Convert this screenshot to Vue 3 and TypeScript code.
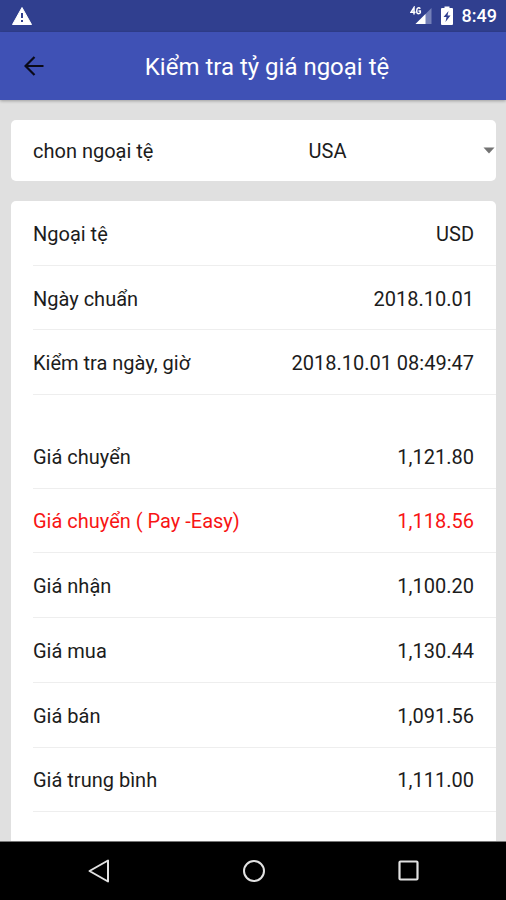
<script setup lang="ts">
import { ref } from 'vue'

interface Rate {
  label: string
  value: string
  highlight?: boolean
}

const currency = ref('USA')

const info: Rate[] = [
  { label: 'Ngoại tệ', value: 'USD' },
  { label: 'Ngày chuẩn', value: '2018.10.01' },
  { label: 'Kiểm tra ngày, giờ', value: '2018.10.01 08:49:47' },
]

const rates: Rate[] = [
  { label: 'Giá chuyển', value: '1,121.80' },
  { label: 'Giá chuyển ( Pay -Easy)', value: '1,118.56', highlight: true },
  { label: 'Giá nhận', value: '1,100.20' },
  { label: 'Giá mua', value: '1,130.44' },
  { label: 'Giá bán', value: '1,091.56' },
  { label: 'Giá trung bình', value: '1,111.00' },
]
</script>

<template>
  <div class="screen">
    <div class="status">
      <svg class="warning" width="20" height="18" viewBox="0 0 20 18" aria-hidden="true">
        <path d="M10 0.5 L19.5 17.5 H0.5 Z" fill="#fff" stroke="#fff" stroke-linejoin="round" />
        <path d="M9 6h2v5H9zM9 13h2v2H9z" fill="#303f8f" />
      </svg>
      <div class="status-right">
        <svg width="22" height="20" viewBox="0 0 22 20" aria-hidden="true">
          <path d="M21.500 2V18H5.500Z" fill="#7480b8" />
          <path d="M5.500 18L15.500 8V18Z" fill="#fff" />
          <path d="M0 0H11V9H0z" fill="#303f8f" />
          <path d="M4 8.500V1.500L1 6.300h4.500M10.300 2.800Q9.300 1.500 8 2Q6.700 2.500 6.700 5Q6.700 7.500 8.200 7.700Q10 7.700 10.300 6.800V5H8.500" fill="none" stroke="#fff" stroke-width="1.500" />
        </svg>
        <svg class="battery" width="12" height="20" viewBox="0 0 12 20" aria-hidden="true">
          <path d="M3.500 0.500h5V2H11q1 0 1 1v15q0 1-1 1H1q-1 0-1-1V3q0-1 1-1h2.500z" fill="#fff" />
          <path d="M7.500 5 L2.500 11H5.500L4.500 16 L9.500 9.500H6.500Z" fill="#303f8f" />
        </svg>
        <span class="clock">8:49</span>
      </div>
    </div>

    <header class="bar">
      <button class="back" type="button" aria-label="Quay lại">
        <svg width="20" height="20" viewBox="0 0 20 20" aria-hidden="true">
          <path d="M19.500 10H2M10.500 1 L1.500 10 L10.500 19" fill="none" stroke="#0a0a18" stroke-width="2.200" />
        </svg>
      </button>
      <h1>Kiểm tra tỷ giá ngoại tệ</h1>
    </header>

    <main class="content">
      <section class="card picker">
        <label for="currency">chon ngoại tệ</label>
        <div class="select-wrap">
          <select id="currency" v-model="currency">
            <option value="USA">USA</option>
          </select>
          <svg class="caret" width="12" height="7" viewBox="0 0 12 7" aria-hidden="true">
            <path d="M0.500 0.500h11L6 6.500z" fill="#737373" />
          </svg>
        </div>
      </section>

      <dl class="card list">
        <div v-for="row in info" :key="row.label" class="row">
          <dt>{{ row.label }}</dt>
          <dd>{{ row.value }}</dd>
        </div>
        <div class="spacer"></div>
        <div v-for="row in rates" :key="row.label" class="row" :class="{ highlight: row.highlight }">
          <dt>{{ row.label }}</dt>
          <dd>{{ row.value }}</dd>
        </div>
        <div class="spacer"></div>
      </dl>
    </main>

    <nav class="nav">
      <button type="button" aria-label="Trở về">
        <svg width="24" height="24" viewBox="0 0 24 24" aria-hidden="true">
          <path d="M21 1.500V22.500L2.500 12Z" fill="none" stroke="#e2e2e2" stroke-width="2" stroke-linejoin="round" />
        </svg>
      </button>
      <button type="button" aria-label="Màn hình chính">
        <svg width="24" height="24" viewBox="0 0 24 24" aria-hidden="true">
          <circle cx="12" cy="12" r="10" fill="none" stroke="#e2e2e2" stroke-width="2" />
        </svg>
      </button>
      <button type="button" aria-label="Ứng dụng gần đây">
        <svg width="24" height="24" viewBox="0 0 24 24" aria-hidden="true">
          <rect x="2.500" y="2.500" width="18" height="18" rx="1" fill="none" stroke="#e2e2e2" stroke-width="2.200" />
        </svg>
      </button>
    </nav>
  </div>
</template>

<style>
body {
  margin: 0;
  background: #e0e0e0;
}
</style>

<style scoped>
.screen {
  display: flex;
  flex-direction: column;
  min-height: 100vh;
  font-family: Roboto, "Noto Sans", sans-serif;
  font-size: 20px;
  line-height: 24px;
  color: #1c1c1c;
}

button {
  display: flex;
  align-items: center;
  justify-content: center;
  padding: 0;
  border: 0;
  background: none;
}

.status {
  display: flex;
  align-items: center;
  justify-content: space-between;
  height: 32px;
  padding: 0 9px 0 12px;
  background: #303f8f;
}

.status-right {
  display: flex;
  align-items: center;
  gap: 9px;
}

.clock {
  color: #fff;
  font-size: 18px;
  font-weight: 500;
}

.bar {
  position: relative;
  z-index: 1;
  display: grid;
  grid-template-columns: 68px 1fr 40px;
  align-items: center;
  height: 68px;
  background: #3f51b5;
  box-shadow: 0 1px 3px rgba(0, 0, 0, 0.3);
}

.back {
  height: 68px;
}

h1 {
  margin: 0;
  padding-top: 2px;
  text-align: center;
  color: #fff;
  font-size: 24px;
  font-weight: 400;
}

.content {
  flex: 1;
  display: flex;
  flex-direction: column;
  gap: 20px;
  padding: 20px 10px 0 11px;
  background: #e0e0e0;
}

.card {
  margin: 0;
  padding-left: 22px;
  border-radius: 5px;
  background: #fff;
}

.picker {
  display: grid;
  grid-template-columns: 4fr 3fr;
  align-items: center;
  height: 61px;
}

.select-wrap {
  position: relative;
  display: flex;
  align-items: center;
}

select {
  width: 100%;
  height: 61px;
  padding: 0 24px 0 11px;
  border: 0;
  border-radius: 5px;
  appearance: none;
  background: transparent;
  color: inherit;
  font: inherit;
}

.caret {
  position: absolute;
  right: 1px;
  pointer-events: none;
}

.list {
  flex: 1;
  display: flex;
  flex-direction: column;
  border-radius: 5px 5px 0 0;
}

.row {
  flex: 20 0 0;
  display: flex;
  align-items: center;
  justify-content: space-between;
  box-sizing: border-box;
  min-height: 48px;
  padding-right: 22px;
  border-bottom: 1px solid #eee;
}

.spacer {
  flex: 9 0 0;
}

dt,
dd {
  margin: 0;
  padding-top: 2px;
}

.highlight {
  color: #f81414;
}

.nav {
  display: flex;
  justify-content: center;
  height: 58px;
  padding-left: 2px;
  border-top: 1px solid #777;
  background: #000;
}

.nav button {
  width: 155px;
}
</style>
